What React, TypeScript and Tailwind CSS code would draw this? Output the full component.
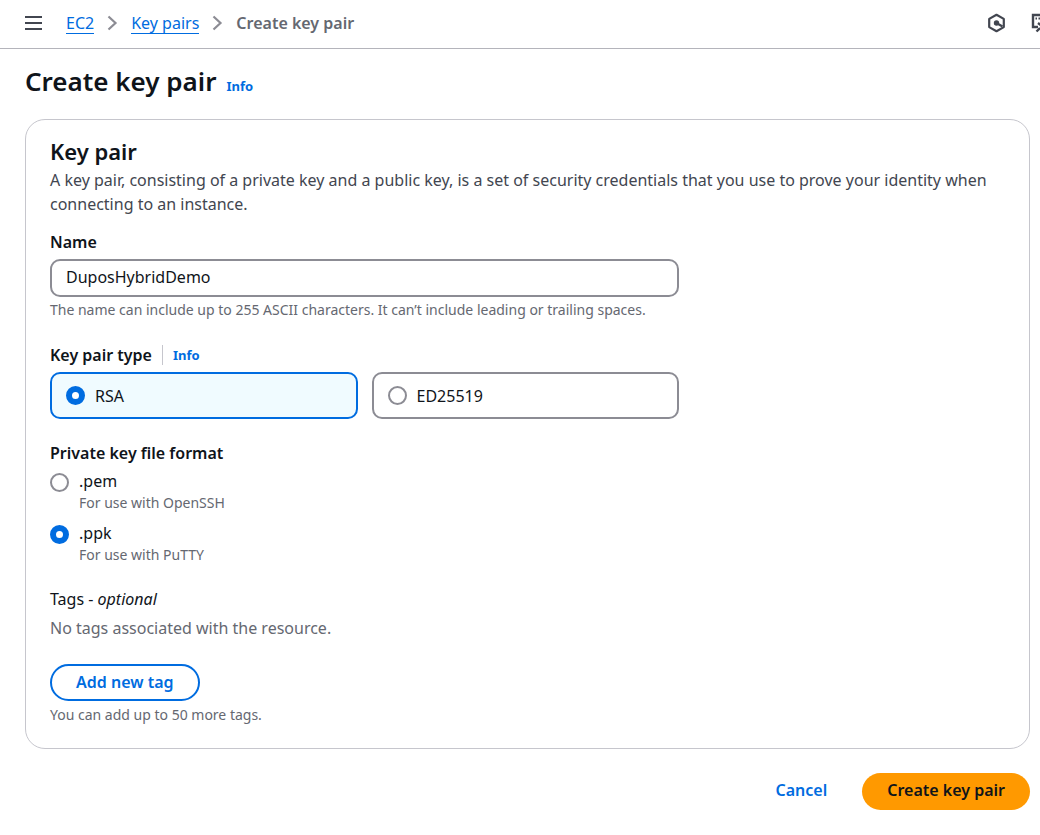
import { useState, type ReactNode } from 'react'

const keyTypes = ['RSA', 'ED25519']

const fileFormats = [
  { value: '.pem', hint: 'For use with OpenSSH' },
  { value: '.ppk', hint: 'For use with PuTTY' },
]

const radioClass =
  'size-[19px] shrink-0 appearance-none rounded-full border-2 border-[#8c8c94] bg-white checked:border-[6px] checked:border-[#006ce0]'

function Chevron() {
  return (
    <svg className="h-4 w-[11px] text-[#8c8c94]" viewBox="0 0 11 16" fill="none" stroke="currentColor" strokeWidth="2.2" aria-hidden="true">
      <path d="M1.5 1.5 8.5 8l-7 6.5" />
    </svg>
  )
}

function InfoLink() {
  return (
    <a href="#info" className="text-[13px] leading-5 font-bold text-[#006ce0]">
      Info
    </a>
  )
}

function Hint({ children }: { children: ReactNode }) {
  return <p className="text-sm leading-5 text-[#656871]">{children}</p>
}

function TopBar() {
  return (
    <header className="flex h-[49px] items-center border-b border-[#b4b4bb] pb-[2px] pl-[25px]">
      <button type="button" aria-label="Open navigation" className="mr-6 text-[#424650]">
        <svg className="h-5 w-[17px]" viewBox="0 0 17 20" stroke="currentColor" strokeWidth="2" aria-hidden="true">
          <path d="M0 4h17M0 10h17M0 16h17" />
        </svg>
      </button>
      <nav aria-label="Breadcrumbs" className="flex items-center gap-[13px] leading-5">
        <a href="#ec2" className="border-b border-[#006ce0] text-[#006ce0]">EC2</a>
        <Chevron />
        <a href="#key-pairs" className="border-b border-[#006ce0] text-[#006ce0]">Key pairs</a>
        <Chevron />
        <span className="font-semibold text-[#656871]">Create key pair</span>
      </nav>
      <div className="ml-auto flex items-center gap-6 text-[#424650]">
        <button type="button" aria-label="Assistant">
          <svg className="size-5" viewBox="0 0 20 20" fill="none" stroke="currentColor" strokeWidth="2.2" aria-hidden="true">
            <path d="M9.5 1.8 16.8 5.9v8.2L9.5 18.2 2.2 14.1V5.9z" strokeLinejoin="round" />
            <circle cx="9.5" cy="10" r="2.7" fill="currentColor" stroke="none" />
            <path d="m9.500 10 6 3.500" />
          </svg>
        </button>
        <button type="button" aria-label="Shell" className="w-[9px] overflow-hidden">
          <svg className="h-5 w-5" viewBox="0 0 20 20" fill="none" stroke="currentColor" strokeWidth="2.4" aria-hidden="true">
            <path d="M7 14H2V2h17v12" />
            <path d="M4.500 5.500h1.500M7.500 5.500h1.500" strokeWidth="2" />
            <path d="M5.500 18.500 9 15M7 10l4 3v4" />
          </svg>
        </button>
      </div>
    </header>
  )
}

export default function App() {
  const [name, setName] = useState('DuposHybridDemo')
  const [keyType, setKeyType] = useState('RSA')
  const [format, setFormat] = useState('.ppk')

  return (
    <div className="min-h-screen bg-white font-['Noto_Sans',sans-serif] text-base text-[#0f141a]">
      <TopBar />
      <main className="pt-4 pr-[10px] pb-6 pl-[25px]">
        <div className="flex items-baseline gap-[10px]">
          <h1 className="text-[26px] leading-8 font-semibold">Create key pair</h1>
          <InfoLink />
        </div>

        <form onSubmit={(event) => event.preventDefault()}>
          <section className="mt-[22px] rounded-[20px] border border-[#c6c6cd] px-6 pt-4 pb-[23px]">
            <h2 className="text-[22px] leading-[30px] font-semibold">Key pair</h2>
            <p className="mt-[2px] leading-6 text-[#424650]">
              A key pair, consisting of a private key and a public key, is a set of security credentials that you use to prove your identity when
              connecting to an instance.
            </p>

            <div className="mt-[14px] max-w-[629px]">
              <label htmlFor="name" className="block leading-6 font-semibold">Name</label>
              <input
                id="name"
                value={name}
                onChange={(event) => setName(event.target.value)}
                className="mt-[5px] mb-[3px] block h-[38px] w-full rounded-[10px] border-2 border-[#8c8c94] px-[14px] pb-[2px]"
              />
              <Hint>The name can include up to 255 ASCII characters. It can’t include leading or trailing spaces.</Hint>
            </div>

            <fieldset className="mt-[23px] max-w-[629px]">
              <div className="flex items-center">
                <legend className="float-left leading-6 font-semibold">Key pair type</legend>
                <span className="mx-[10px] h-5 w-px bg-[#c6c6cd]" />
                <InfoLink />
              </div>
              <div className="mt-[5px] grid grid-cols-2 gap-[14px]">
                {keyTypes.map((type) => (
                  <label
                    key={type}
                    className="flex h-[47px] items-center gap-[10px] rounded-[10px] border-2 border-[#8c8c94] px-[14px] has-checked:border-[#006ce0] has-checked:bg-[#f0fbff]"
                  >
                    <input type="radio" name="keyType" checked={keyType === type} onChange={() => setKeyType(type)} className={radioClass} />
                    {type}
                  </label>
                ))}
              </div>
            </fieldset>

            <fieldset className="mt-[22px]">
              <legend className="leading-6 font-semibold">Private key file format</legend>
              <div className="mt-1 flex flex-col gap-2">
                {fileFormats.map(({ value, hint }) => (
                  <label key={value} className="flex items-start gap-[10px]">
                    <input type="radio" name="format" checked={format === value} onChange={() => setFormat(value)} className={`mt-1 ${radioClass}`} />
                    <span>
                      <span className="block leading-6">{value}</span>
                      <span className="block text-sm leading-5 text-[#656871]">{hint}</span>
                    </span>
                  </label>
                ))}
              </div>
            </fieldset>

            <h3 className="mt-[22px] leading-6">
              Tags - <em>optional</em>
            </h3>
            <p className="mt-[5px] leading-6 text-[#656871]">No tags associated with the resource.</p>
            <button type="button" className="mt-6 mb-1 h-[37px] rounded-full border-2 border-[#006ce0] px-6 pb-[2px] font-semibold text-[#006ce0]">
              Add new tag
            </button>
            <Hint>You can add up to 50 more tags.</Hint>
          </section>

          <div className="mt-6 flex justify-end gap-[10px]">
            <button type="button" className="h-[37px] rounded-full px-[25px] pb-[3px] font-semibold text-[#006ce0]">Cancel</button>
            <button type="submit" className="h-[37px] rounded-full bg-[#ff9900] px-[25px] pb-[3px] font-semibold">Create key pair</button>
          </div>
        </form>
      </main>
    </div>
  )
}
